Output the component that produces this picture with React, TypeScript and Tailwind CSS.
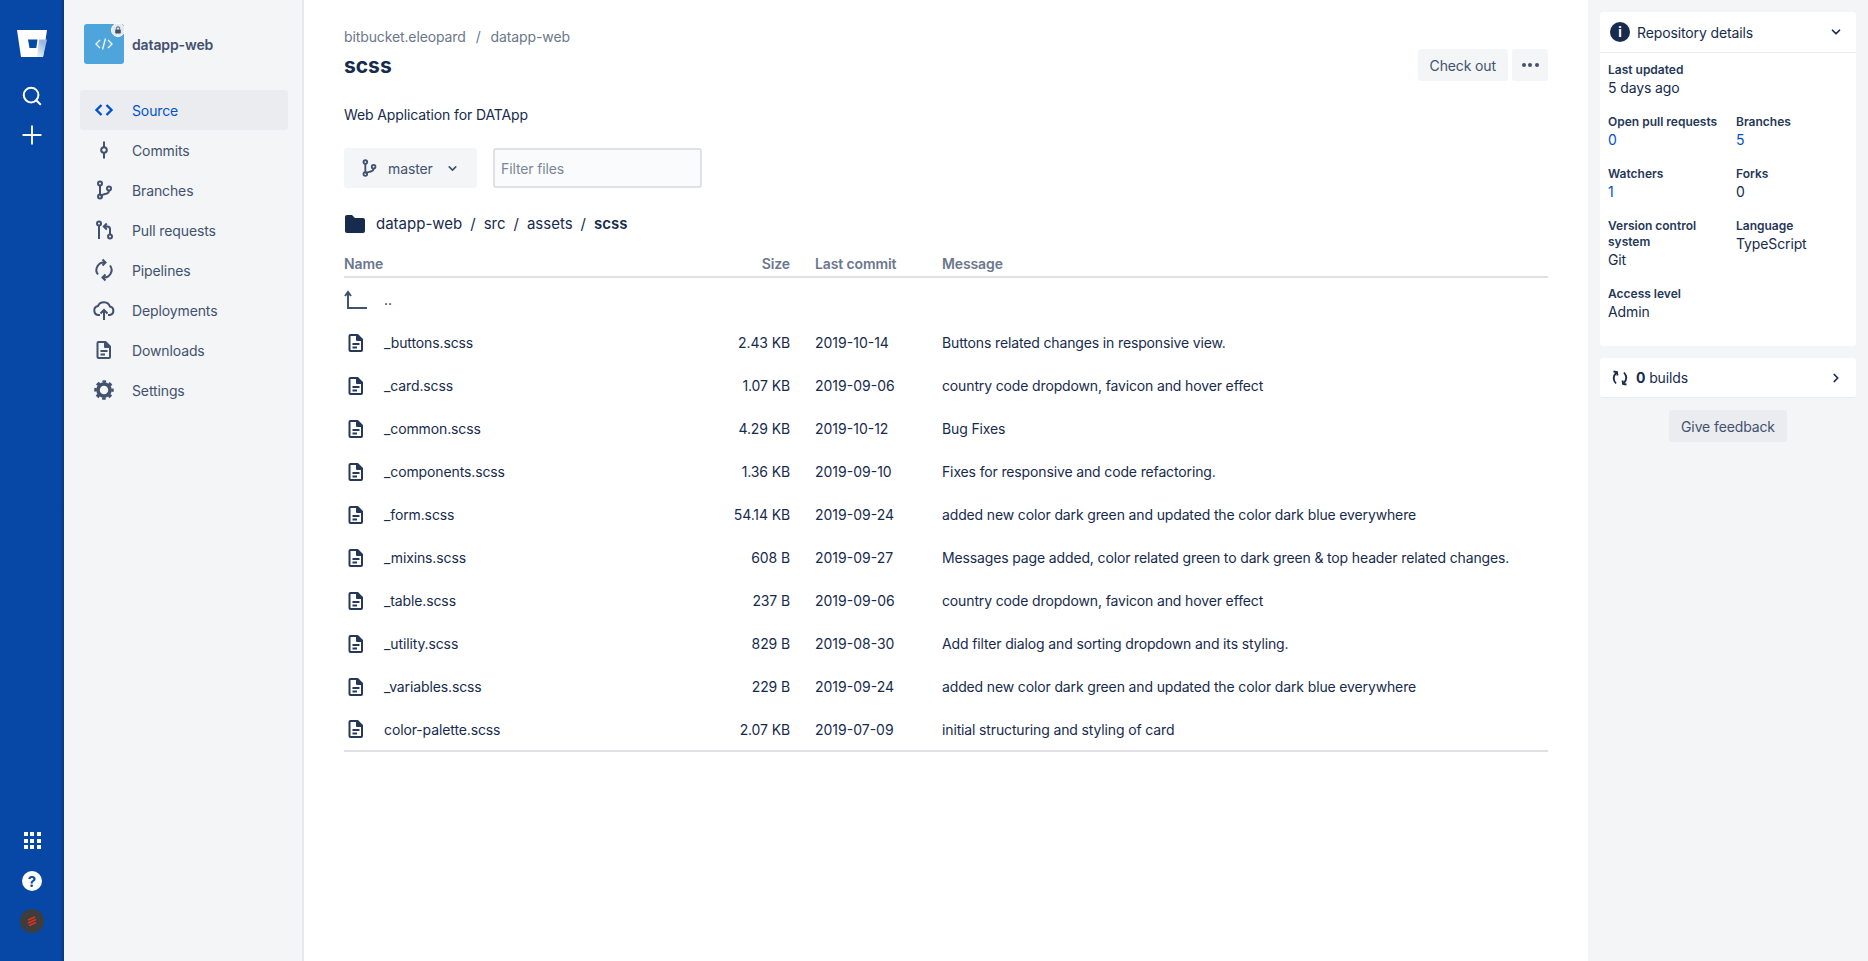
import { ChevronDown, ChevronRight, Search, Plus } from 'lucide-react';

const NAV = [
  { label: 'Source', icon: 'source' },
  { label: 'Commits', icon: 'commits' },
  { label: 'Branches', icon: 'branches' },
  { label: 'Pull requests', icon: 'pulls' },
  { label: 'Pipelines', icon: 'pipelines' },
  { label: 'Deployments', icon: 'deployments' },
  { label: 'Downloads', icon: 'downloads' },
  { label: 'Settings', icon: 'settings' },
];

const FILES = [
  ['_buttons.scss', '2.43 KB', '2019-10-14', 'Buttons related changes in responsive view.'],
  ['_card.scss', '1.07 KB', '2019-09-06', 'country code dropdown, favicon and hover effect'],
  ['_common.scss', '4.29 KB', '2019-10-12', 'Bug Fixes'],
  ['_components.scss', '1.36 KB', '2019-09-10', 'Fixes for responsive and code refactoring.'],
  ['_form.scss', '54.14 KB', '2019-09-24', 'added new color dark green and updated the color dark blue everywhere'],
  ['_mixins.scss', '608 B', '2019-09-27', 'Messages page added, color related green to dark green & top header related changes.'],
  ['_table.scss', '237 B', '2019-09-06', 'country code dropdown, favicon and hover effect'],
  ['_utility.scss', '829 B', '2019-08-30', 'Add filter dialog and sorting dropdown and its styling.'],
  ['_variables.scss', '229 B', '2019-09-24', 'added new color dark green and updated the color dark blue everywhere'],
  ['color-palette.scss', '2.07 KB', '2019-07-09', 'initial structuring and styling of card'],
];

function BranchIcon({ className }: { className?: string }) {
  return (
    <svg viewBox="0 0 24 24" fill="none" stroke="currentColor" strokeWidth="2" className={className}>
      <circle cx="8" cy="5.5" r="2" />
      <circle cx="8" cy="18.5" r="2" />
      <circle cx="17" cy="10.5" r="2" />
      <path d="M8 7.5v9M17 12.5c0 2.5-2 3.2-4 3.6-2 .4-4 .6-5 2" />
    </svg>
  );
}

function FileIcon({ className }: { className?: string }) {
  return (
    <svg viewBox="0 0 24 24" fill="none" stroke="currentColor" strokeWidth="2" className={className}>
      <path d="M6.5 4h7l4.5 4.5V19a1 1 0 0 1-1 1H6.500a1 1 0 0 1-1-1V5a1 1 0 0 1 1-1z" strokeLinejoin="round" />
      <path d="M13 4v5h5" fill="currentColor" strokeLinejoin="round" />
      <path d="M8.5 13h7M8.5 16.5h4.5" />
    </svg>
  );
}

function NavIcon({ name }: { name: string }) {
  const cls = 'w-6 h-6';
  if (name === 'source') {
    return (
      <svg viewBox="0 0 24 24" fill="none" stroke="currentColor" strokeWidth="2.4" className={cls}>
        <path d="M9.5 7l-5 5 5 5M14.5 7l5 5-5 5" />
      </svg>
    );
  }
  if (name === 'commits') {
    return (
      <svg viewBox="0 0 24 24" fill="none" stroke="currentColor" strokeWidth="2" className={cls}>
        <circle cx="12" cy="12" r="2.8" />
        <path d="M12 3.5v5.7M12 14.8v5.7" />
      </svg>
    );
  }
  if (name === 'branches') return <BranchIcon className={cls} />;
  if (name === 'pulls') {
    return (
      <svg viewBox="0 0 24 24" fill="none" stroke="currentColor" strokeWidth="2" className={cls}>
        <circle cx="7" cy="5.5" r="2" />
        <circle cx="18" cy="18.5" r="2" />
        <path d="M7 7.5V21M18 16.5V11c0-1.5-1-2.5-2.500-2.500H12.500M14.800 5.500l-3 3 3 3" />
      </svg>
    );
  }
  if (name === 'pipelines') {
    return (
      <svg viewBox="0 0 24 24" fill="none" stroke="currentColor" strokeWidth="2" className={cls}>
        <path d="M6 16.500A7.500 7.500 0 0 1 13 4.500M18 7.500A7.500 7.500 0 0 1 11 19.500" />
        <path d="M10.500 1.500l3 3-3 3M13.500 22.500l-3-3 3-3" />
      </svg>
    );
  }
  if (name === 'deployments') {
    return (
      <svg viewBox="0 0 24 24" fill="none" stroke="currentColor" strokeWidth="2" className={cls}>
        <path d="M8 17H6.500a4.500 4.500 0 0 1-.6-8.900A6.500 6.500 0 0 1 18 8.600 4.300 4.300 0 0 1 18 17h-2" />
        <path d="M12 22v-9.500M8.500 15.500l3.500-3.500 3.500 3.500" />
      </svg>
    );
  }
  if (name === 'downloads') return <FileIcon className={cls} />;
  return (
    <svg viewBox="0 0 24 24" fill="none" stroke="currentColor" className={cls}>
      <circle cx="12" cy="12" r="6" strokeWidth="3.500" />
      <circle cx="12" cy="12" r="8.500" strokeWidth="2.500" strokeDasharray="3.600 3.076" strokeDashoffset="1.800" />
    </svg>
  );
}

function Detail({ label, value, link }: { label: string; value: string; link?: boolean }) {
  return (
    <div>
      <div className="text-[12px] leading-[16px] font-semibold tracking-normal text-[#253858]">{label}</div>
      <div className={`text-[14px] leading-[20px] ${link ? 'text-[#0052cc]' : 'text-[#172b4d]'}`}>{value}</div>
    </div>
  );
}

export default function App() {
  return (
    <div className="flex h-[961px] overflow-hidden bg-white font-['Inter',sans-serif] text-[14px] tracking-[-0.12px] text-[#172b4d]">
      {/* Global nav */}
      <div className="w-[64px] shrink-0 bg-[#0747a6] flex flex-col items-center pt-[29px] pb-[28px] text-white relative">
        <div className="absolute right-0 top-0 bottom-0 w-[4px] bg-gradient-to-r from-transparent to-[#06397f]" />
        <svg viewBox="0 0 32 28" className="w-[32px] h-[28px] relative">
          <defs>
            <linearGradient id="bb" x1="1" y1="0.4" x2="0.4" y2="0.9">
              <stop offset="0" stopColor="#9db9e0" />
              <stop offset="1" stopColor="#ffffff" />
            </linearGradient>
          </defs>
          <path d="M1 1h30l-4 27H5z" fill="#ffffff" />
          <path d="M31 10.500L27 28H5l16-.5 2-17z" fill="url(#bb)" />
          <path d="M12 10.500h9.500l-1.200 8.500h-6.800z" fill="#0747a6" />
        </svg>
        <Search className="w-[22px] h-[22px] mt-[28px] relative" strokeWidth={2.2} />
        <Plus className="w-[30px] h-[30px] mt-[13px] relative" strokeWidth={1.5} />
        <div className="flex-1" />
        <div className="grid grid-cols-3 gap-[2.500px] w-[17px] relative">
          {Array.from({ length: 9 }).map((_, i) => (
            <div key={i} className="w-[4px] h-[4px] bg-white" />
          ))}
        </div>
        <div className="w-[20px] h-[20px] rounded-full bg-white text-[#0747a6] flex items-center justify-center font-bold text-[15px] leading-none mt-[22px] relative">?</div>
        <div className="w-[24px] h-[24px] rounded-full bg-[#3d3d3d] mt-[18px] flex items-center justify-center relative">
          <svg viewBox="0 0 12 12" className="w-[12px] h-[12px]" fill="none" stroke="#e0321c" strokeWidth="1.500">
            <path d="M2 5l7-3M2 8l8-3.500M3 10.500l7-3" />
          </svg>
        </div>
      </div>

      {/* Project sidebar */}
      <div className="w-[240px] shrink-0 bg-[#f4f5f7] border-r-[2px] border-[#e6e8ec] pt-[24px] pl-[16px] pr-[14px]">
        <div className="flex items-center gap-[8px] pl-[4px] h-[40px]">
          <div className="relative w-[40px] h-[40px] rounded-[3px] bg-[#4ea5dc] flex items-center justify-center text-white">
            <svg viewBox="0 0 24 24" fill="none" stroke="currentColor" strokeWidth="1.300" className="w-[24px] h-[24px]">
              <path d="M8 8l-4 4 4 4M16 8l4 4-4 4M13.500 6.500l-3 11" />
            </svg>
            <div className="absolute -top-[1px] -right-[1px] w-[14px] h-[14px] rounded-full bg-[#e4e6ea] border border-white flex items-center justify-center">
              <svg viewBox="0 0 10 10" className="w-[8px] h-[8px]" fill="#42526e">
                <rect x="1.500" y="4.500" width="7" height="5" rx="1" />
                <path d="M3 4.500V3a2 2 0 0 1 4 0v1.500" fill="none" stroke="#42526e" strokeWidth="1.200" />
              </svg>
            </div>
          </div>
          <span className="font-semibold text-[#42526e]">datapp-web</span>
        </div>
        <div className="mt-[26px]">
          {NAV.map((item, i) => (
            <div
              key={item.label}
              className={`h-[40px] flex items-center rounded-[3px] pl-[12px] gap-[16px] ${i === 0 ? 'bg-[#ebecf0] text-[#0052cc]' : 'text-[#42526e]'}`}
            >
              <NavIcon name={item.icon} />
              <span>{item.label}</span>
            </div>
          ))}
        </div>
      </div>

      {/* Main content */}
      <div className="flex-1 min-w-0 pl-[40px] pr-[40px] pt-[27px]">
        <div className="flex items-center text-[#6b778c] leading-[20px]">
          <span>bitbucket.eleopard</span>
          <span className="mx-[10px]">/</span>
          <span>datapp-web</span>
        </div>
        <div className="flex items-start justify-between mt-[1px]">
          <h1 className="text-[21px] leading-[32px] font-bold tracking-normal mt-[2px]">scss</h1>
          <div className="flex gap-[4px] mt-[1px]">
            <button className="h-[32px] px-[12px] rounded-[3px] bg-[#f4f5f7] text-[#42526e]">Check out</button>
            <button className="h-[32px] w-[36px] rounded-[3px] bg-[#f4f5f7] flex items-center justify-center gap-[2.500px]">
              <span className="w-[4px] h-[4px] rounded-full bg-[#42526e]" />
              <span className="w-[4px] h-[4px] rounded-full bg-[#42526e]" />
              <span className="w-[4px] h-[4px] rounded-full bg-[#42526e]" />
            </button>
          </div>
        </div>
        <p className="mt-[23px] leading-[20px]">Web Application for DATApp</p>
        <div className="flex items-center gap-[16px] mt-[23px]">
          <div className="w-[133px] h-[40px] rounded-[3px] bg-[#f4f5f7] flex items-center pl-[14px] text-[#42526e]">
            <BranchIcon className="w-[22px] h-[22px]" />
            <span className="ml-[8px]">master</span>
            <ChevronDown className="w-[13px] h-[13px] ml-[13px]" strokeWidth={3} />
          </div>
          <div className="w-[209px] h-[40px] rounded-[3px] bg-[#fafbfc] border-[2px] border-[#dfe1e6] flex items-center pl-[6px] text-[#7a869a]">Filter files</div>
        </div>
        <div className="flex items-center mt-[20px] h-[32px] text-[15px] tracking-normal">
          <svg viewBox="0 0 22 20" className="w-[22px] h-[20px] text-[#172b4d] mr-[10px]" fill="currentColor">
            <path d="M1 3a2 2 0 0 1 2-2h5l3 3h8a2 2 0 0 1 2 2v11a2 2 0 0 1-2 2H3a2 2 0 0 1-2-2z" />
          </svg>
          <span>datapp-web</span>
          <span className="mx-[8px]">/</span>
          <span>src</span>
          <span className="mx-[8px]">/</span>
          <span>assets</span>
          <span className="mx-[8px]">/</span>
          <span className="font-semibold">scss</span>
        </div>
        <table className="w-full mt-[10px] border-collapse table-fixed">
          <thead>
            <tr className="border-b-[2px] border-[#dfe1e6] text-[#6b778c] h-[27px]">
              <th className="text-left font-semibold w-[326px]">Name</th>
              <th className="text-right font-semibold w-[120px]">Size</th>
              <th className="text-left font-semibold w-[152px] pl-[25px]">Last commit</th>
              <th className="text-left font-semibold">Message</th>
            </tr>
          </thead>
          <tbody className="border-b-[2px] border-[#dfe1e6]">
            <tr className="h-[44px]">
              <td colSpan={4}>
                <div className="flex items-center">
                  <svg viewBox="0 0 24 20" className="w-[24px] h-[20px] text-[#42526e]" fill="none" stroke="currentColor" strokeWidth="2">
                    <path d="M4 19V2M1 6l3-4 3 4M4 18h19" />
                  </svg>
                  <span className="ml-[16px]">..</span>
                </div>
              </td>
            </tr>
            {FILES.map((f) => (
              <tr key={f[0]} className="h-[43px]">
                <td>
                  <div className="flex items-center">
                    <FileIcon className="w-[24px] h-[24px] text-[#253858]" />
                    <span className="ml-[16px]">{f[0]}</span>
                  </div>
                </td>
                <td className="text-right">{f[1]}</td>
                <td className="pl-[25px] tracking-normal">{f[2]}</td>
                <td className="tracking-[-0.14px]">{f[3]}</td>
              </tr>
            ))}
          </tbody>
        </table>
      </div>

      {/* Right sidebar */}
      <div className="w-[280px] shrink-0 bg-[#f4f5f7] pt-[12px] px-[12px]">
        <div className="bg-white rounded-[3px]">
          <div className="h-[41px] flex items-center pl-[10px] pr-[13px] border-b border-[#ebecf0]">
            <div className="w-[20px] h-[20px] rounded-full bg-[#172b4d] text-white flex items-center justify-center text-[13px] font-bold leading-none">i</div>
            <span className="ml-[7px] flex-1">Repository details</span>
            <ChevronDown className="w-[14px] h-[14px]" strokeWidth={3} />
          </div>
          <div className="px-[8px] pt-[9px] pb-[24px]">
            <Detail label="Last updated" value="5 days ago" />
            <div className="grid grid-cols-[128px_1fr] gap-y-[16px] mt-[16px]">
              <Detail label="Open pull requests" value="0" link />
              <Detail label="Branches" value="5" link />
              <Detail label="Watchers" value="1" link />
              <Detail label="Forks" value="0" />
              <Detail label="Version control system" value="Git" />
              <Detail label="Language" value="TypeScript" />
              <Detail label="Access level" value="Admin" />
            </div>
          </div>
        </div>
        <div className="bg-white rounded-[3px] h-[40px] mt-[12px] flex items-center pl-[11px] pr-[13px] border-b border-[#ebecf0]">
          <svg viewBox="0 0 18 18" className="w-[18px] h-[18px]" fill="none" stroke="currentColor" strokeWidth="1.800">
            <path d="M5 14.500C2 11 2 7 5.500 3.500M13 3.500c3 3.500 3 7.500-.5 11" />
            <path d="M2.500 2.500L6 3l.5 3.500M15.500 15.500L12 15l-.5-3.500" />
          </svg>
          <span className="ml-[7px] flex-1"><span className="font-bold">0</span> builds</span>
          <ChevronRight className="w-[14px] h-[14px]" strokeWidth={3} />
        </div>
        <div className="flex justify-center mt-[12px]">
          <button className="h-[32px] px-[12px] rounded-[3px] bg-[#ebecf0] text-[#42526e]">Give feedback</button>
        </div>
      </div>
    </div>
  );
}
